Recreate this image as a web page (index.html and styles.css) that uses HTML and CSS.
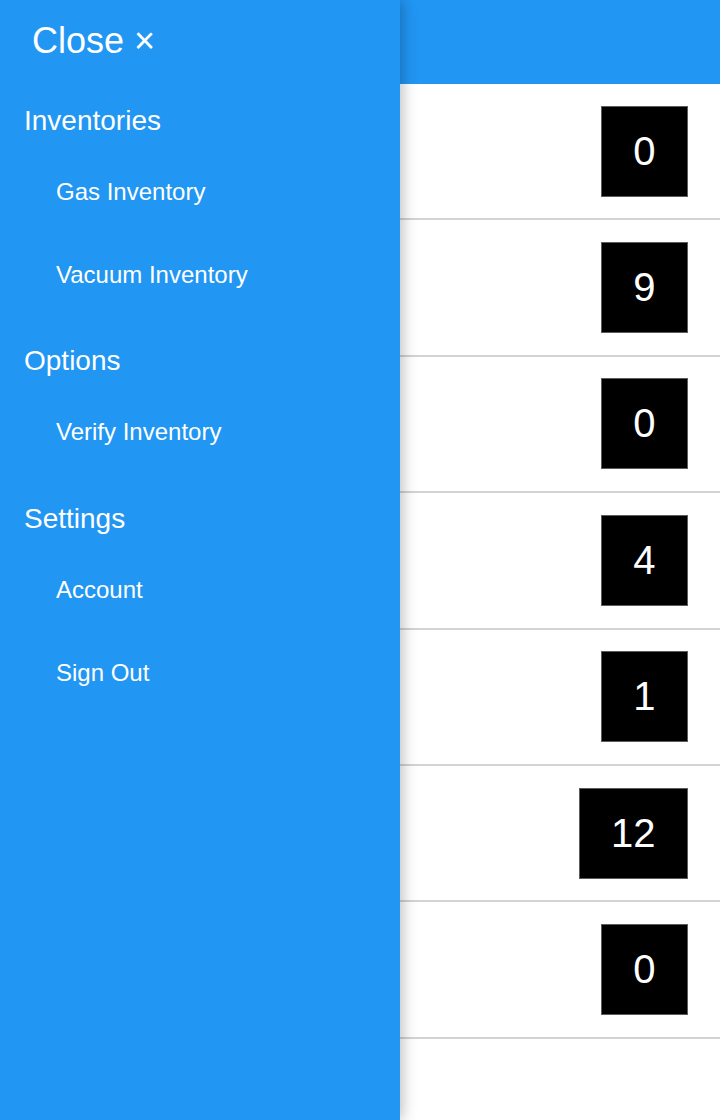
FILE: index.html
```html
<!DOCTYPE html>
<html>
<head>
<meta charset="utf-8">
<link rel="stylesheet" href="styles.css">
</head>
<body>
<div class="main">
  <header class="topbar"></header>
  <ul class="rows">
    <li class="row"><span class="count">0</span></li>
    <li class="row"><span class="count">9</span></li>
    <li class="row"><span class="count">0</span></li>
    <li class="row"><span class="count">4</span></li>
    <li class="row"><span class="count">1</span></li>
    <li class="row"><span class="count">12</span></li>
    <li class="row"><span class="count">0</span></li>
  </ul>
</div>
<nav class="sidebar">
  <div class="close">Close ×</div>
  <div class="group">
    <div class="heading">Inventories</div>
    <a class="item">Gas Inventory</a>
    <a class="item">Vacuum Inventory</a>
  </div>
  <div class="group">
    <div class="heading">Options</div>
    <a class="item">Verify Inventory</a>
  </div>
  <div class="group">
    <div class="heading">Settings</div>
    <a class="item">Account</a>
    <a class="item">Sign Out</a>
  </div>
</nav>
</body>
</html>
```
FILE: styles.css
```css
html, body {
  margin: 0;
  padding: 0;
  height: 100%;
}
body {
  font-family: "Liberation Sans", Arial, sans-serif;
  background: #ffffff;
  color: #000;
  position: relative;
  overflow: hidden;
}
.main {
  width: 720px;
}
.topbar {
  height: 84px;
  background: #2196f3;
}
.rows {
  list-style: none;
  margin: 0;
  padding: 0;
}
.row {
  height: 134.4px;
  border-bottom: 2px solid #d3d3d3;
  display: flex;
  align-items: center;
  justify-content: flex-end;
  padding: 0 32px;
  box-sizing: content-box;
}
.count {
  display: block;
  background: #000;
  color: #fff;
  border: 1px solid #5c5c5c;
  font-size: 40px;
  line-height: 89px;
  padding: 0 31.5px;
  text-align: center;
}
.sidebar {
  position: absolute;
  top: 0;
  left: 0;
  bottom: 0;
  width: 400px;
  background: #2196f3;
  color: #fff;
  box-shadow: 2px 0 14px rgba(0, 0, 0, 0.28);
  padding-left: 24px;
  box-sizing: border-box;
}
.close {
  font-size: 36px;
  line-height: 69px;
  padding-top: 6px;
  padding-left: 8px;
}
.group {
  margin-top: 16.5px;
  display: flex;
  flex-direction: column;
}
.heading {
  font-size: 28px;
  line-height: 58px;
}
.item {
  font-size: 24px;
  line-height: 83px;
  padding-left: 32px;
  color: #fff;
}
```
